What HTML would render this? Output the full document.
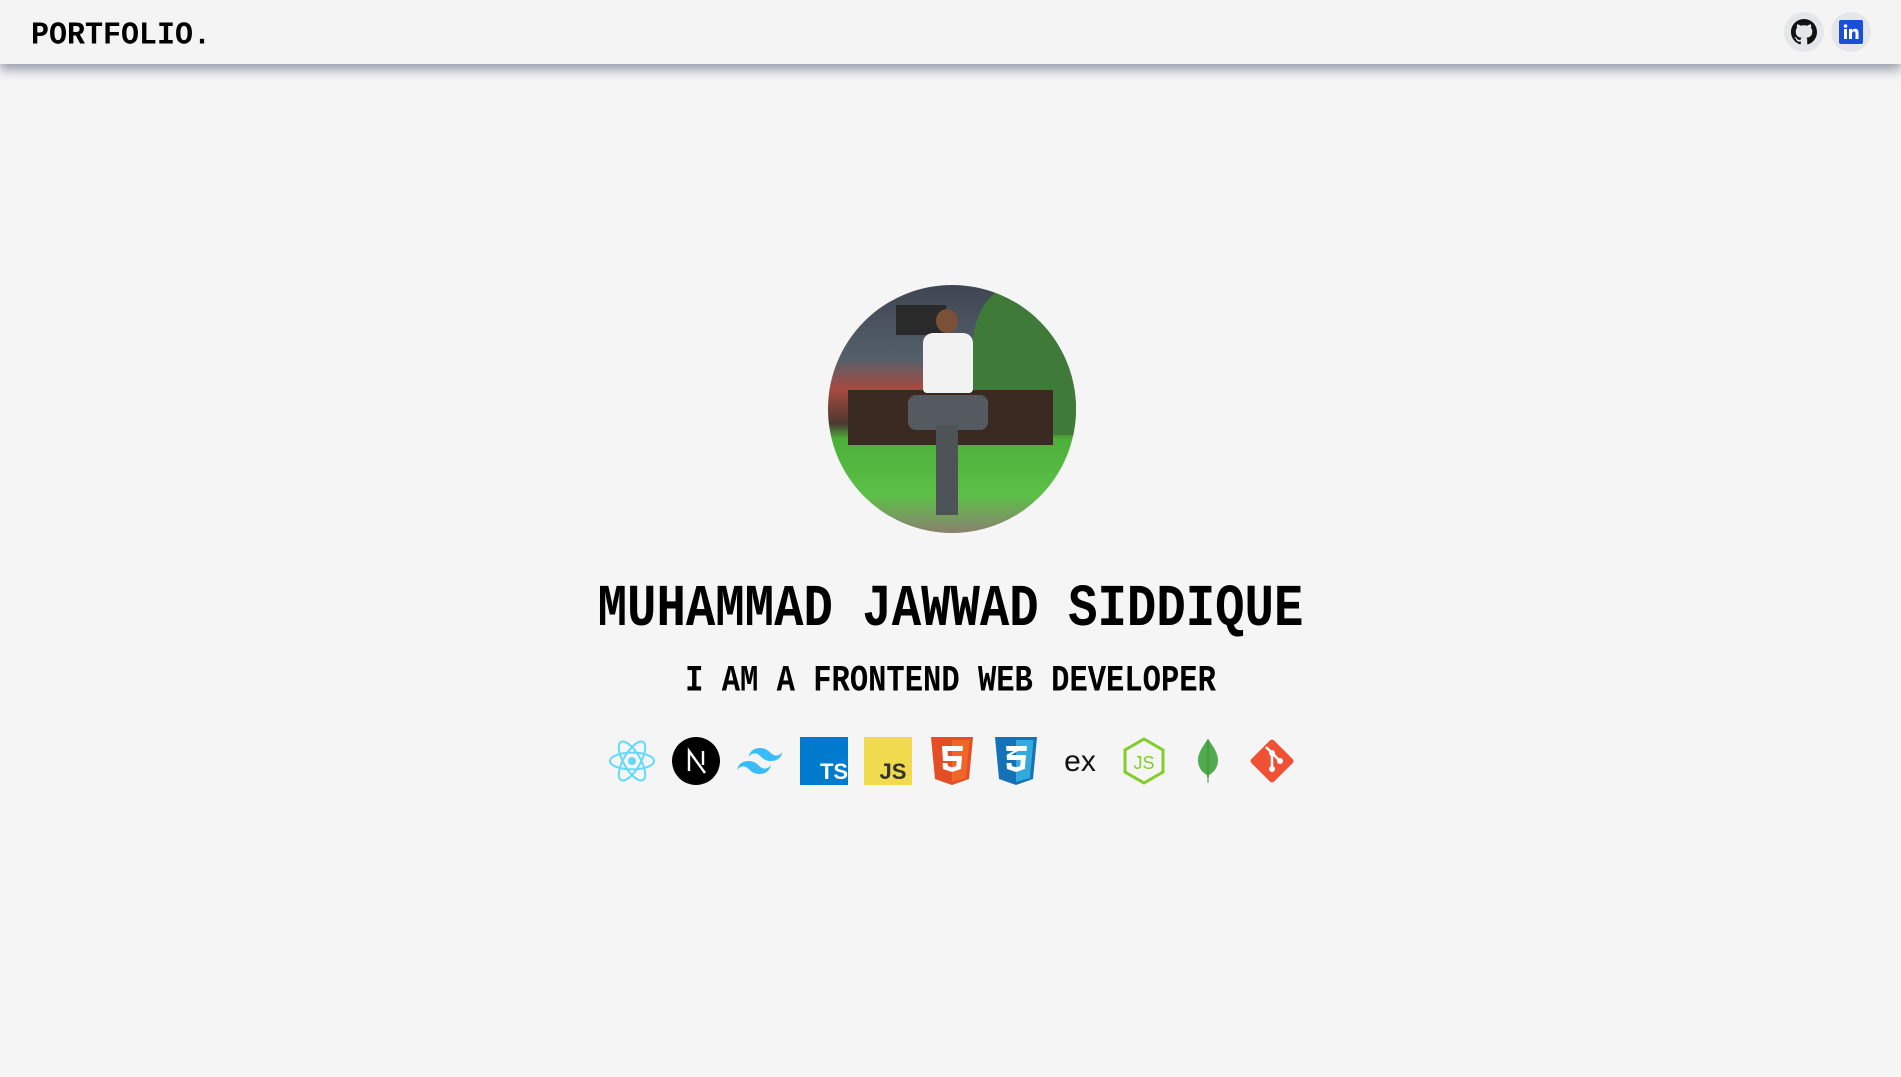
<!DOCTYPE html>
<html><head><meta charset="utf-8"><style>
*{margin:0;padding:0;box-sizing:border-box}
body{width:1901px;height:1077px;background:#f5f5f5;font-family:"Liberation Mono",monospace;position:relative;overflow:hidden}
.hdr{position:absolute;left:0;top:0;width:1901px;height:64px;background:#f4f4f4;box-shadow:0 6px 10px rgba(80,90,110,.55)}
.logo{position:absolute;left:31px;top:19px;font-size:30px;font-weight:bold;color:#000;transform:scaleY(1.05)}
.sc{position:absolute;top:12px;width:40px;height:40px;border-radius:50%;background:#e5e6ea;display:flex;align-items:center;justify-content:center}
.av{position:absolute;left:828px;top:285px;width:248px;height:248px;border-radius:50%;overflow:hidden;background:linear-gradient(#3e4652 0%,#55606a 30%,#a84a40 42%,#4a3a30 56%,#4caf3a 62%,#5cc048 85%,#8a8070 100%)}
.t{position:absolute;left:0;width:1901px;text-align:center;font-weight:bold;color:#000}
.icons{position:absolute;left:608px;top:737px;display:flex;gap:16px}
.icons>div{width:48px;height:48px;display:flex;align-items:center;justify-content:center}
</style></head><body>
<div class="hdr">
<div class="logo">PORTFOLIO.</div>
<div class="sc" style="left:1784px"><svg width="26" height="26" viewBox="0 0 16 16"><path fill="#111" d="M8 0C3.58 0 0 3.58 0 8c0 3.54 2.29 6.53 5.47 7.59.4.07.55-.17.55-.38v-1.33c-2.23.48-2.7-1.07-2.7-1.07-.36-.92-.89-1.17-.89-1.17-.73-.5.06-.49.06-.49.8.06 1.23.83 1.23.83.72 1.22 1.87.87 2.33.66.07-.52.28-.87.5-1.07-1.78-.2-3.64-.89-3.64-3.95 0-.87.31-1.59.82-2.15-.08-.2-.36-1.02.08-2.12 0 0 .67-.21 2.2.82A7.6 7.6 0 0 1 8 3.87c.68 0 1.36.09 2 .27 1.53-1.04 2.2-.82 2.2-.82.44 1.1.16 1.92.08 2.12.51.56.82 1.27.82 2.15 0 3.07-1.87 3.75-3.65 3.95.29.25.54.73.54 1.48v2.2c0 .21.15.46.55.38A8 8 0 0 0 16 8c0-4.42-3.58-8-8-8z"/></svg></div>
<div class="sc" style="left:1831px"><svg width="24" height="24" viewBox="0 0 24 24"><rect width="24" height="24" rx="2" fill="#1a4fd8"/><rect x="5" y="9" width="3" height="10" fill="#fff"/><circle cx="6.5" cy="6" r="1.8" fill="#fff"/><path d="M10 9h3v1.5c.6-1 1.7-1.7 3.2-1.7 2.5 0 3.3 1.6 3.3 4V19h-3v-5.5c0-1.3-.4-2.1-1.6-2.1-1.3 0-1.9 1-1.9 2.3V19h-3z" fill="#fff"/></svg></div>
</div>
<div class="av">
<div style="position:absolute;left:145px;top:0;width:110px;height:150px;background:#3f7a38;border-radius:40% 0 0 0"></div>
<div style="position:absolute;left:68px;top:20px;width:50px;height:30px;background:#2a2a2a"></div>
<div style="position:absolute;left:20px;top:105px;width:205px;height:55px;background:#3a2a22"></div>
<div style="position:absolute;left:108px;top:24px;width:22px;height:24px;border-radius:50%;background:#7a5038"></div>
<div style="position:absolute;left:95px;top:48px;width:50px;height:60px;background:#f2f2f2;border-radius:10px 10px 4px 4px"></div>
<div style="position:absolute;left:80px;top:110px;width:80px;height:35px;background:#555a60;border-radius:8px"></div>
<div style="position:absolute;left:108px;top:140px;width:22px;height:90px;background:#4e5358"></div>
</div>
<div class="t" style="top:581px;font-size:49px;transform:scaleY(1.22)">MUHAMMAD JAWWAD SIDDIQUE</div>
<div class="t" style="top:665px;font-size:30.5px;transform:scaleY(1.2)">I AM A FRONTEND WEB DEVELOPER</div>
<div class="icons">
<div><svg width="48" height="48" viewBox="-12 -12 24 24"><g fill="none" stroke="#61dafb" stroke-width="1"><ellipse rx="11" ry="4.2"/><ellipse rx="11" ry="4.2" transform="rotate(60)"/><ellipse rx="11" ry="4.2" transform="rotate(120)"/></g><circle r="2" fill="#61dafb"/></svg></div>
<div><svg width="48" height="48" viewBox="0 0 48 48"><circle cx="24" cy="24" r="24" fill="#000"/><path d="M17 34V14l16 22M31 14v14" stroke="#fff" stroke-width="2.4" fill="none"/></svg></div>
<div><svg width="48" height="30" viewBox="0 0 48 30"><path fill="#38bdf8" d="M24 2c-6 0-10 3-11.5 9 2.3-3 5-4.1 8-3.4 1.7.4 2.9 1.7 4.3 3C27 12.7 29.6 15 35 15c6 0 10-3 11.5-9-2.3 3-5 4.1-8 3.4-1.7-.4-2.9-1.7-4.3-3C32 4.3 29.4 2 24 2zM12.5 15C6.5 15 2.5 18 1 24c2.3-3 5-4.1 8-3.4 1.7.4 2.9 1.7 4.3 3 2.2 2.1 4.8 4.4 10.2 4.4 6 0 10-3 11.5-9-2.3 3-5 4.1-8 3.4-1.7-.4-2.9-1.7-4.3-3C20.5 17.3 17.9 15 12.5 15z"/></svg></div>
<div><svg width="48" height="48"><rect width="48" height="48" fill="#007acc"/><text x="34" y="42" text-anchor="middle" font-family="Liberation Sans" font-weight="bold" font-size="22" fill="#fff">TS</text></svg></div>
<div><svg width="48" height="48"><rect width="48" height="48" fill="#f0db4f"/><text x="29" y="42" text-anchor="middle" font-family="Liberation Sans" font-weight="bold" font-size="22" fill="#323330">JS</text></svg></div>
<div><svg width="42" height="48" viewBox="0 0 42 48"><path d="M0 0h42l-4 42-17 6-17-6z" fill="#e44d26"/><path d="M21 3v42l14-4 3.5-38z" fill="#f16529"/><path d="M11 9h21l-.5 5H16.5l.5 5h14l-1 13-9 3-9-3-.5-6h5l.3 3 4.2 1.3 4.3-1.3.4-5H12z" fill="#fff"/></svg></div>
<div><svg width="42" height="48" viewBox="0 0 42 48"><path d="M0 0h42l-4 42-17 6-17-6z" fill="#1572b6"/><path d="M21 3v42l14-4 3.5-38z" fill="#33a9dc"/><path d="M11 9h21l-.5 5H23l-7 4h15l-1.2 14-8.8 3-9-3-.5-6h5l.3 3 4.2 1.3 4.3-1.3.4-6H12l-.4-5 7-4H11.5z" fill="#fff"/></svg></div>
<div><svg width="48" height="48"><text x="24" y="34" text-anchor="middle" font-family="Liberation Sans" font-size="30" fill="#111" style="font-weight:300">ex</text></svg></div>
<div><svg width="44" height="48" viewBox="0 0 44 48"><path d="M22 2l19 11v22L22 46 3 35V13z" fill="none" stroke="#83cd29" stroke-width="3"/><text x="22" y="32" text-anchor="middle" font-family="Liberation Sans" font-size="18" fill="#83cd29">JS</text></svg></div>
<div><svg width="24" height="48" viewBox="0 0 24 48"><path d="M12 2c5 7 10 14 10 21 0 8-5 13-9 15l-1 8-1-8C7 36 2 31 2 23 2 16 7 9 12 2z" fill="#4fa94d"/><path d="M12 2v44" stroke="#3f8a3d" stroke-width="1"/></svg></div>
<div><svg width="48" height="48" viewBox="0 0 48 48"><rect x="8" y="8" width="32" height="32" rx="3" fill="#f05033" transform="rotate(45 24 24)"/><path d="M18 10l6 6v16M24 16l8 8" stroke="#fff" stroke-width="2.5" fill="none"/><circle cx="24" cy="16" r="3" fill="#fff"/><circle cx="24" cy="32" r="3" fill="#fff"/><circle cx="32" cy="24" r="3" fill="#fff"/></svg></div>
</div>
</body></html>
